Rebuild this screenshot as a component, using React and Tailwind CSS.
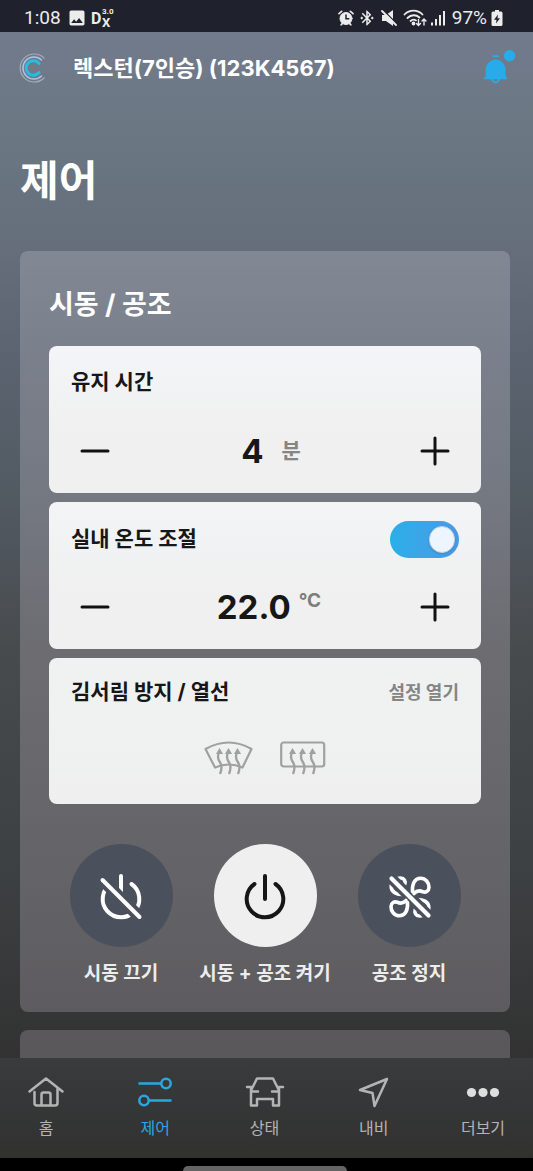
import React, { useState } from 'react';
import { MdImage, MdBluetoothConnected } from 'react-icons/md';

const StatusBar = () => (
  <div className="flex items-center justify-between h-8 bg-[#1f222d] pl-6 pr-[30px] pt-1 text-[#ececec] font-['Roboto',sans-serif] text-[19px]">
    <div className="flex items-center">
      <span>1:08</span>
      <MdImage className="w-5 h-5 ml-[6px]" />
      <svg className="ml-1 w-6 h-7" viewBox="0 0 24 28" fill="currentColor" fontWeight="700">
        <text x="0" y="20" fontSize="16">D</text>
        <text x="11" y="23" fontSize="13">X</text>
        <text x="11" y="10" fontSize="8">3.0</text>
      </svg>
    </div>
    <div className="flex items-center">
      <svg className="w-4 h-4" viewBox="0 0 16 16" fill="none" stroke="currentColor" strokeLinecap="round">
        <circle cx="8" cy="8.5" r="6" fill="currentColor" />
        <path d="M1 3.6 3.6 1.4M15 3.6l-2.6-2.2M3.2 14.8l1-1.2M12.8 14.8l-1-1.2" strokeWidth="1.7" />
        <path d="M8 5v3.8h2.8" stroke="#1f222d" strokeWidth="1.5" />
      </svg>
      <MdBluetoothConnected className="w-[18px] h-[18px] ml-1" stroke="currentColor" />
      <svg className="ml-[5px] w-4 h-4" viewBox="0 0 16 16" fill="currentColor">
        <path d="M1 5h4L12 0v16L5 11H1z" />
        <path d="M2 0 17 15" stroke="#1f222d" strokeWidth="1.5" />
        <path d="M1 1 15 15" stroke="currentColor" strokeWidth="1.8" strokeLinecap="round" />
      </svg>
      <svg className="ml-[6px] w-6 h-[18px]" viewBox="0 0 24 18" fill="none" stroke="currentColor" strokeWidth="1.8" strokeLinecap="round">
        <path d="M1.5 5.5C6.5.3 14.5.3 19.5 5.5M4.5 9c3.5-3.6 8.5-3.6 12-.5M7.5 12c1.8-1.7 3.8-1.7 5.5-.6" />
        <circle cx="10.5" cy="14.5" r="1" fill="currentColor" />
        <path d="M15.5 10.5v6m-2-2 2 2 2-2M21 16v-6m-2 2 2-2 2 2" strokeWidth="1.4" />
      </svg>
      <svg className="ml-1 w-[14px] h-4" viewBox="0 0 14 16" fill="currentColor">
        <rect x="0" y="12.5" width="2" height="3" />
        <rect x="4" y="9" width="2" height="6.5" />
        <rect x="8" y="5" width="2" height="10.5" />
        <rect x="12" y="1" width="2" height="14.5" />
      </svg>
      <span className="ml-[7px]">97%</span>
      <svg className="ml-1 w-3 h-4" viewBox="0 0 12 16" fill="currentColor">
        <path d="M4 0h4v1.6h2q1.5 0 1.5 1.5V14.5q0 1.5-1.5 1.5H2Q.5 16 .5 14.5V3.1Q.5 1.6 2 1.6h2z" />
        <path d="M7 4.5 3 9.8h2.5L5 13.5 9 8.2H6.5z" fill="#1f222d" />
      </svg>
    </div>
  </div>
);

const Logo = () => (
  <svg className="w-[30px] h-[30px]" viewBox="0 0 30 30" fill="none" strokeLinecap="round">
    <path d="M25 5A14 14 0 1 0 25 25" stroke="#a3adba" strokeWidth="1.2" />
    <path d="M22.5 7A11 11 0 1 0 22.5 23" stroke="#a9c4e4" strokeWidth="1.5" />
    <path d="M20 10.5A7.2 7.2 0 1 0 20 19.5" stroke="#22bfe0" strokeWidth="3" />
  </svg>
);

const Bell = () => (
  <svg className="w-8 h-9" viewBox="0 0 32 36" fill="#28abe9">
    <rect x="8.5" y="5.3" width="6.5" height="2" rx=".6" />
    <path d="M1.7 27.3V19.500a9.9 9.9 0 0 1 19.8 0v7.8z" />
    <rect x="0" y="27" width="23" height="2.2" rx=".8" />
    <path d="M8.3 29a3.3 3.3 0 0 0 6.6 0" fill="none" stroke="#28abe9" strokeWidth="1.8" />
    <circle cx="25.6" cy="5.7" r="5.7" />
  </svg>
);

const StepButton = ({ label, plus, onClick }) => (
  <button type="button" aria-label={label} onClick={onClick} className="flex items-center justify-center w-12 h-10 text-[#111]">
    <svg className="w-[30px] h-[30px]" viewBox="0 0 30 30" stroke="currentColor" strokeWidth="3" strokeLinecap="round">
      <path d={plus ? 'M2 15h26M15 2v26' : 'M2 15h26'} />
    </svg>
  </button>
);

const HeatArrows = ({ x, gap }) => (
  <>
    {[0, 1, 2].map((i) => (
      <g key={i} transform={`translate(${x + i * gap} 0)`}>
        <path d="M0 12C-2.5 16-1.8 19 .3 22S3 28 .5 34" fill="none" strokeWidth="2.3" />
        <path d="M0 8 3.6 14H-3.6z" fill="#a0a0a0" stroke="none" />
      </g>
    ))}
  </>
);

const FrontDefrost = () => (
  <svg className="w-[50px] h-9" viewBox="0 0 50 36" fill="none" stroke="#a0a0a0" strokeWidth="2.2" strokeLinejoin="round">
    <path d="M1.5 9Q25-4 47.5 9L38.5 27.500Q25 21.500 11 27.500Z" />
    <HeatArrows x={15.5} gap={9} />
  </svg>
);

const RearDefrost = () => (
  <svg className="w-[46px] h-9" viewBox="0 0 46 36" fill="none" stroke="#a0a0a0" strokeWidth="2.2">
    <rect x="1.2" y="2.500" width="43" height="24" rx="2.5" />
    <HeatArrows x={12.5} gap={10} />
  </svg>
);

const PowerIcon = () => (
  <svg className="w-12 h-12" viewBox="0 0 48 48" fill="none" stroke="currentColor" strokeWidth="4" strokeLinecap="round">
    <path d="M24 4v23M13.5 12a18.3 18.3 0 1 0 21 0" />
  </svg>
);

const PowerOffIcon = () => (
  <svg className="w-12 h-12" viewBox="0 0 48 48" fill="none" stroke="currentColor" strokeWidth="4" strokeLinecap="round">
    <path d="M24 4v23M13.5 12a18.3 18.3 0 1 0 21 0" />
    <path d="M4 6.5 44 46.5" stroke="#4b505d" strokeWidth="12" />
    <path d="M5.5 8 42.5 45" />
  </svg>
);

const FanOffIcon = () => {
  const blade = 'M27.5 19.5C27 12 29.5 6.2 35.5 6.2C40.5 6.2 44.2 10.5 44 15.5C43.8 19.5 40.5 20.8 37.8 19.8C34.5 18 31.5 18.8 29 21.5';
  return (
    <svg className="w-12 h-12" viewBox="0 0 48 48" fill="none" stroke="currentColor" strokeWidth="3.6" strokeLinecap="round">
      <path d={blade} transform="rotate(90 25 25)" />
      <path d={blade} transform="rotate(270 25 25)" />
      <path d="M3 3 47 47" stroke="#4b505d" strokeWidth="11" />
      <path d={blade} />
      <path d={blade} transform="rotate(180 25 25)" />
      <path d="M6.5 6.5 43.5 43.5" strokeWidth="4.2" />
    </svg>
  );
};

const actions = [
  { label: '시동 끄기', icon: PowerOffIcon, style: 'bg-[#4b505d] text-white' },
  { label: '시동 + 공조 켜기', icon: PowerIcon, style: 'bg-[#efefef] text-[#161616]' },
  { label: '공조 정지', icon: FanOffIcon, style: 'bg-[#4b505d] text-white' },
];

const navItems = [
  {
    label: '홈',
    icon: <path d="M1.5 15.5 18 2.5l16.5 13M6.5 16v11q0 2.5 2.5 2.5h18q2.5 0 2.5-2.5V12M13.5 29V18.5q0-2 2-2h5q2 0 2 2V29" />,
  },
  {
    label: '제어',
    active: true,
    icon: (
      <>
        <circle cx="29" cy="7.5" r="4.7" />
        <circle cx="7" cy="24.5" r="4.7" />
        <path d="M2.5 7.5h21.5M12 24.5h21.5" />
      </>
    ),
  },
  {
    label: '상태',
    icon: <path d="M4.5 13.5 10 2.5h16l5.5 11M0 11h4.5M36 11h-4.5M4 12.5v17h6v-6.5h16v6.5h6v-17M4.5 15.5H11M31.5 15.5H25" />,
  },
  {
    label: '내비',
    icon: <path d="M31 3 4 14l12.5 3L18.5 30z" />,
  },
  {
    label: '더보기',
    icon: (
      <g fill="#dedede" stroke="none">
        <circle cx="6.5" cy="16.5" r="4.6" />
        <circle cx="18" cy="16.5" r="4.6" />
        <circle cx="29.5" cy="16.5" r="4.6" />
      </g>
    ),
  },
];

const App = () => {
  const [minutes, setMinutes] = useState(4);
  const [temp, setTemp] = useState(22);
  const [tempOn, setTempOn] = useState(true);

  return (
    <div className="min-h-screen flex flex-col bg-[#333] font-['Inter','Noto_Sans_CJK_KR',sans-serif]">
      <StatusBar />

      <div className="flex-1 flex flex-col bg-[linear-gradient(#727b8c_0%,#6a7682_11%,#656d7b_22%,#5b6370_32%,#515961_46%,#484b4e_60%,#3d4042_82%,#323232_100%)]">
        <header className="flex items-center h-[72px] pl-[19px] pr-[17px]">
          <Logo />
          <h2 className="ml-6 text-[22px] font-bold text-white">렉스턴(7인승) (123K4567)</h2>
          <button type="button" aria-label="알림" className="ml-auto">
            <Bell />
          </button>
        </header>

        <main className="flex-1 flex flex-col pl-5 pr-[23px]">
          <h1 className="mt-[49px] text-[42px] leading-[56px] font-bold text-white">제어</h1>

          <section className="mt-[42px] rounded-lg bg-linear-to-b from-white/18 via-[#fff2ff]/20 via-30% to-[#fff2ff]/20 px-[29px] pt-9 pb-6">
            <h2 className="text-[27px] leading-9 font-bold text-white">시동 / 공조</h2>

            <div className="mt-[23px] flex flex-col gap-[9px] text-[#171717]">
              <div className="rounded-lg bg-linear-to-b from-[#f4f5f8] to-[#f0f0f0] to-60% px-[22px] pt-[18px] pb-[22px]">
                <h3 className="flex items-center h-9 text-[21px] font-bold">유지 시간</h3>
                <div className="mt-[31px] flex items-center justify-between">
                  <StepButton label="시간 줄이기" onClick={() => setMinutes(minutes - 1)} />
                  <div className="flex items-center gap-[18px] pl-3">
                    <span className="text-[33px] leading-10 font-bold">{minutes}</span>
                    <span className="text-[21px] text-[#858585] font-bold">분</span>
                  </div>
                  <StepButton label="시간 늘리기" plus onClick={() => setMinutes(minutes + 1)} />
                </div>
              </div>

              <div className="rounded-lg bg-linear-to-b from-[#f2f4f6] to-[#f0f0f0] to-60% px-[22px] pt-[19px] pb-[22px]">
                <div className="flex items-center justify-between h-9">
                  <h3 className="text-[21px] font-bold">실내 온도 조절</h3>
                  <label className="relative block w-[69px] h-[37px] shrink-0">
                    <input
                      type="checkbox"
                      role="switch"
                      aria-label="실내 온도 조절"
                      checked={tempOn}
                      onChange={() => setTempOn(!tempOn)}
                      className="peer appearance-none block w-full h-full rounded-full bg-[#b5b5b5] checked:bg-linear-to-r checked:from-[#28afe8] checked:to-[#4a99e6]"
                    />
                    <span className="absolute top-[5px] left-1 peer-checked:left-[39px] w-[26px] h-[27px] rounded-full bg-[#edf5fe] border border-[#c3d0e0] shadow pointer-events-none" />
                  </label>
                </div>
                <div className="mt-[30px] flex items-center justify-between">
                  <StepButton label="온도 낮추기" onClick={() => setTemp(temp - 0.5)} />
                  <div className="flex items-start gap-2 pl-2">
                    <span className="text-[33px] leading-10 font-bold">{temp.toFixed(1)}</span>
                    <span className="text-[19px] leading-7 text-[#7d7d7d] font-bold">°C</span>
                  </div>
                  <StepButton label="온도 높이기" plus onClick={() => setTemp(temp + 0.5)} />
                </div>
              </div>

              <div className="rounded-lg bg-linear-to-b from-[#f0f2f2] to-[#efefef] px-[22px] pt-4 pb-[26px]">
                <div className="flex items-center justify-between h-9">
                  <h3 className="text-[21px] font-bold">김서림 방지 / 열선</h3>
                  <button type="button" className="text-[18px] font-bold text-[#858585]">설정 열기</button>
                </div>
                <div className="mt-7 flex items-center justify-center gap-[26px] h-10">
                  <FrontDefrost />
                  <RearDefrost />
                </div>
              </div>
            </div>

            <div className="mt-10 grid grid-cols-3">
              {actions.map(({ label, icon: Icon, style }) => (
                <button key={label} type="button" className="flex flex-col items-center">
                  <span className={`flex items-center justify-center w-[103px] h-[103px] rounded-full ${style}`}>
                    <Icon />
                  </span>
                  <span className="mt-[13px] text-[19px] leading-7 font-bold text-[#ededed] whitespace-nowrap">{label}</span>
                </button>
              ))}
            </div>
          </section>

          <section className="mt-[18px] flex-1 min-h-7 rounded-t-lg bg-[#5b585b]" />
        </main>
      </div>

      <nav className="flex justify-between h-[100px] pt-[18px] pl-[6px] pr-[10px] bg-linear-to-b from-[#393b3d] to-[#313130]">
        {navItems.map(({ label, icon, active }) => (
          <a
            key={label}
            href="#"
            aria-current={active ? 'page' : undefined}
            className={`flex flex-col items-center w-20 ${active ? 'text-[#2ba7e0]' : 'text-[#b4b4b4]'}`}
          >
            <svg
              className="w-9 h-8 overflow-visible"
              viewBox="0 0 36 32"
              fill="none"
              stroke="currentColor"
              strokeWidth="2.5"
              strokeLinecap="round"
              strokeLinejoin="round"
            >
              {icon}
            </svg>
            <span className="mt-2 text-base leading-6">{label}</span>
          </a>
        ))}
      </nav>

      <div className="flex justify-center h-[13px] bg-black pt-2 pr-1">
        <div className="w-[164px] h-[5px] rounded-t-full bg-[#646464]" />
      </div>
    </div>
  );
};

export default App;
